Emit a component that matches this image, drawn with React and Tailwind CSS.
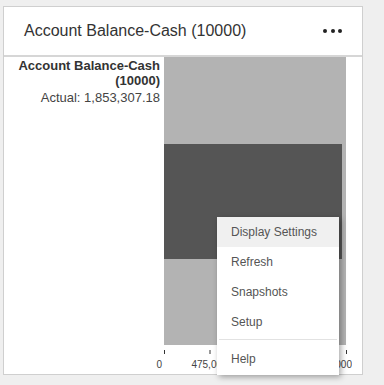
const menuItems = ["Display Settings", "Refresh", "Snapshots", "Setup"];

const ticks = [
  { x: 0, label: "0", anchor: "end", dx: -2 },
  { x: 45.5, label: "475,000", anchor: "middle", dx: 0 },
  { x: 91, label: "950,000", anchor: "middle", dx: 0 },
  { x: 136.5, label: "1,425,000", anchor: "middle", dx: 0 },
  { x: 182, label: "1,900,000", anchor: "end", dx: 6 },
];

// svg starts 10px left of the plot so the "0" label fits
function Chart() {
  return (
    <svg width="198" height="317" className="block -ml-[10px]">
      <g transform="translate(10,0)">
        <rect x="0" y="0" width="182" height="288" fill="#b3b3b3" />
        <rect x="0" y="87" width="178" height="115" fill="#555555" />
        {ticks.map((t) => (
          <g key={t.label}>
            <line x1={t.x + 0.5} x2={t.x + 0.5} y1="293" y2="297" stroke="#333" strokeWidth="1" />
            <text
              x={t.x + t.dx}
              y="311"
              fontSize="10"
              fill="#444"
              textAnchor={t.anchor}
              fontFamily="Liberation Sans, Arial, sans-serif"
            >
              {t.label}
            </text>
          </g>
        ))}
      </g>
    </svg>
  );
}

const App = () => {
  return (
    <div
      className="w-[384px] h-[385px] bg-[#efefef] pt-[6px] pl-[3px]"
      style={{ fontFamily: "'Liberation Sans', Arial, sans-serif" }}
    >
      <div className="relative w-[360px] h-[369px] bg-white border border-[#cfcfcf]">
        <div className="h-[50px] flex items-center justify-between pl-[20px] pr-[20px] border-b-2 border-[#d6d6d6]">
          <span className="text-[16px] text-[#333]">Account Balance-Cash (10000)</span>
          <span className="flex gap-[3.5px]">
            <span className="w-[4px] h-[4px] rounded-full bg-[#222]" />
            <span className="w-[4px] h-[4px] rounded-full bg-[#222]" />
            <span className="w-[4px] h-[4px] rounded-full bg-[#222]" />
          </span>
        </div>
        <div className="flex">
          <div className="relative z-10 w-[160px] pr-[4px] pt-[1px] text-right text-[13px] leading-[15px] text-[#333]">
            <div className="font-bold">Account Balance-Cash (10000)</div>
            <div className="text-[#444] mt-[2px]">Actual: 1,853,307.18</div>
          </div>
          <Chart />
        </div>

        <div className="absolute z-20 left-[213px] top-[210px] w-[122px] bg-white shadow-[2px_2px_6px_rgba(0,0,0,0.35)] text-[12px] text-[#555]">
          {menuItems.map((item, i) => (
            <div
              key={item}
              className={`h-[30px] flex items-center pl-[14px] ${i === 0 ? "bg-[#f0f0f0]" : ""}`}
            >
              {item}
            </div>
          ))}
          <div className="mx-[2px] my-[2px] h-px bg-[#e2e2e2]" />
          <div className="h-[33px] flex items-center pl-[14px]">Help</div>
        </div>
      </div>
    </div>
  );
};

export default App;
